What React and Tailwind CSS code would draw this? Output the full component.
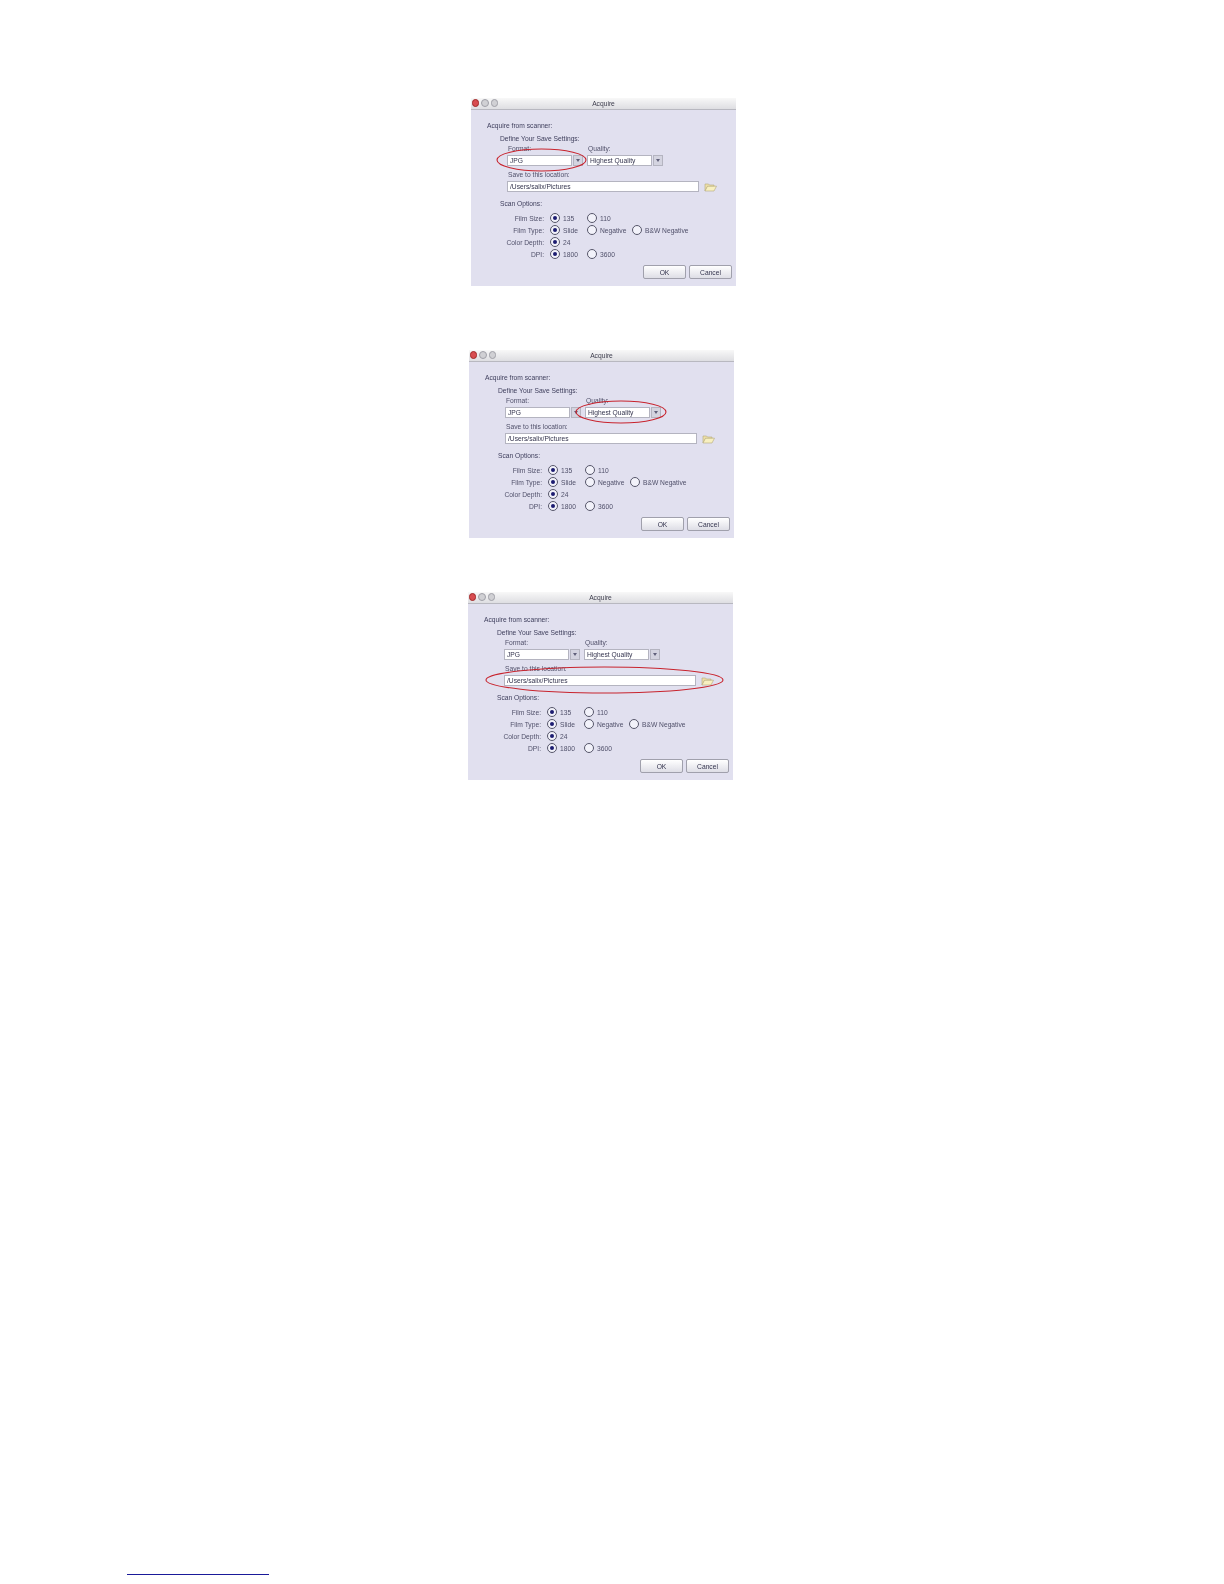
const font = { fontFamily: '"Liberation Sans", Arial, sans-serif' };

function Radio({ on }) {
  return (
    <span className="flex h-[10px] w-[10px] shrink-0 items-center justify-center rounded-full border border-[#56566a] bg-[#f2f2fa]">
      {on && <span className="h-[4.500px] w-[4.500px] rounded-full bg-[#1c1c70]" />}
    </span>
  );
}

function Option({ on, label, className = "" }) {
  return (
    <div className={`flex items-center gap-[3px] ${className}`}>
      <Radio on={on} />
      <span>{label}</span>
    </div>
  );
}

function Row({ label, children }) {
  return (
    <div className="-ml-[16px] flex h-[12px] items-center">
      <span className="mr-[6px] w-[73px] text-right">{label}</span>
      {children}
    </div>
  );
}

function Select({ value, width }) {
  return (
    <div className="flex items-center gap-[1px]">
      <div className={`flex h-[11px] items-center border border-[#b4b4c0] bg-white pl-[2px] text-[#34344e] ${width}`}>{value}</div>
      <div className="flex h-[11px] w-[10px] items-center justify-center border border-[#b4b4c0] bg-[#d4d4e0]">
        <svg width="4" height="3" viewBox="0 0 4 3"><path d="M0 0h4L2 3z" fill="#60607a" /></svg>
      </div>
    </div>
  );
}

function Folder() {
  return (
    <svg width="13" height="10" viewBox="0 0 13 10" className="ml-[5px]">
      <path d="M1 2h3.500l1 1H10v1.500H3.500L1 9z" fill="#eee0a8" stroke="#b4a878" strokeWidth=".6" />
      <path d="M1 9l2.500-4.800h9L10 9z" fill="#f8f0c0" stroke="#b4a878" strokeWidth=".6" />
    </svg>
  );
}

function Light({ color }) {
  return <span className={`h-[7.500px] w-[7.500px] rounded-full border ${color}`} />;
}

function Button({ children }) {
  return (
    <div className="flex h-[14px] w-[43px] items-center justify-center rounded-[2px] border border-[#a0a0ac] bg-gradient-to-b from-[#ffffff] to-[#dedee6] text-[#34344e]">
      {children}
    </div>
  );
}

function Dialog({ left, mt, ellipse }) {
  return (
    <div className={`relative h-[188px] w-[265px] ${left} ${mt}`}>
      <div style={font} className="flex h-full flex-col bg-[#e1e0ef] text-[6.700px] leading-[7px] text-[#50506a] blur-[0.55px]">
        <div className="relative flex h-[12px] shrink-0 items-center justify-center border-b border-[#b8b8c0] bg-gradient-to-b from-[#f8f8f8] to-[#dedee2] text-[#3c3c4c]">
          <div className="absolute left-[0.500px] top-[1px] flex gap-[2px]">
            <Light color="border-[#a02828] bg-[#d84c50]" />
            <Light color="border-[#a0a0a8] bg-[#d0d0d4]" />
            <Light color="border-[#a0a0a8] bg-[#d0d0d4]" />
          </div>
          Acquire
        </div>
        <div className="flex flex-1 flex-col pl-[16px] pt-[12px]">
          <div className="text-[#3e3e5c]">Acquire from scanner:</div>
          <div className="ml-[13px] mt-[6px] text-[#3e3e5c]">Define Your Save Settings:</div>
          <div className="ml-[20px] mt-[3px] flex">
            <div className="w-[80px]">
              <div className="h-[10px] pl-[1px]">Format:</div>
              <Select value="JPG" width="w-[65px]" />
            </div>
            <div>
              <div className="h-[10px] pl-[1px]">Quality:</div>
              <Select value="Highest Quality" width="w-[65px]" />
            </div>
          </div>
          <div className="ml-[21px] mt-[5px]">Save to this location:</div>
          <div className="ml-[20px] mt-[3px] flex items-center">
            <div className="flex h-[11px] w-[192px] items-center border border-[#b4b4c0] bg-white pl-[2px] text-[#34344e]">/Users/salix/Pictures</div>
            <Folder />
          </div>
          <div className="ml-[13px] mt-[8px] text-[#3e3e5c]">Scan Options:</div>
          <div className="mt-[5px]">
            <Row label="Film Size:">
              <Option on label="135" className="w-[37px]" />
              <Option label="110" />
            </Row>
            <Row label="Film Type:">
              <Option on label="Slide" className="w-[37px]" />
              <Option label="Negative" className="w-[45px]" />
              <Option label="B&W Negative" />
            </Row>
            <Row label="Color Depth:">
              <Option on label="24" />
            </Row>
            <Row label="DPI:">
              <Option on label="1800" className="w-[37px]" />
              <Option label="3600" />
            </Row>
          </div>
          <div className="mr-[4px] mt-[5px] flex justify-end gap-[3px]">
            <Button>OK</Button>
            <Button>Cancel</Button>
          </div>
        </div>
      </div>
      {ellipse}
    </div>
  );
}

function Ring({ className, width, height }) {
  return (
    <svg className={`absolute ${className}`} width={width} height={height} viewBox={`0 0 ${width} ${height}`} fill="none">
      <ellipse cx={width / 2} cy={height / 2} rx={width / 2 - 1} ry={height / 2 - 1} stroke="#c8242e" strokeWidth="1.100" />
    </svg>
  );
}

export default function App() {
  return (
    <div className="h-[1584px] w-[1224px] overflow-hidden bg-white pt-[98px]">
      <Dialog left="ml-[471px]" mt="" ellipse={<Ring className="left-[25px] top-[50px]" width={91} height={24} />} />
      <Dialog left="ml-[469px]" mt="mt-[64px]" ellipse={<Ring className="left-[106px] top-[50px]" width={92} height={24} />} />
      <Dialog left="ml-[468px]" mt="mt-[54px]" ellipse={<Ring className="left-[17px] top-[74px]" width={239} height={28} />} />
      <div className="ml-[127px] mt-[794px] h-[1px] w-[142px] bg-[#1a1a9a]" />
    </div>
  );
}
